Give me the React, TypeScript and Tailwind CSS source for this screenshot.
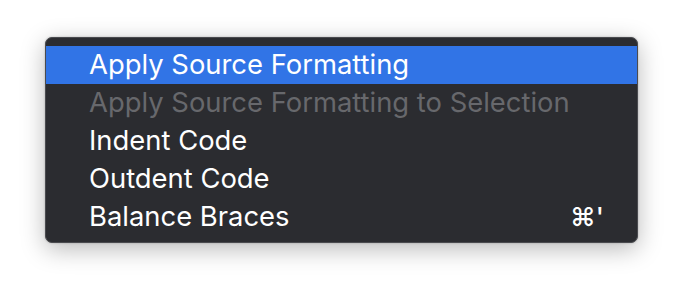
const items = [
  { label: "Apply Source Formatting", active: true },
  { label: "Apply Source Formatting to Selection", disabled: true },
  { label: "Indent Code" },
  { label: "Outdent Code" },
  { label: "Balance Braces", shortcut: "⌘'" },
];

export default function App() {
  return (
    <div className="w-[684px] h-[298px] bg-white flex items-start pt-[37px] pl-[45px] font-['Inter','Liberation_Sans',sans-serif]">
      <div className="w-[593px] h-[206px] rounded-[7px] bg-[#2b2c30] border border-[#4a4b4f] py-[8px] shadow-[0_6px_24px_rgba(0,0,0,0.28),0_0_2px_rgba(0,0,0,0.25)]">
        {items.map((item) => (
          <div
            key={item.label}
            className={`h-[38px] flex items-center justify-between pl-[43px] pr-[33px] text-[27.4px] leading-none ${
              item.active ? "bg-[#3174e6] text-white" : item.disabled ? "text-[#67686c]" : "text-white"
            }`}
          >
            <span className="pb-[1px]">{item.label}</span>
            {item.shortcut && <span className="text-[26px] font-medium">{item.shortcut}</span>}
          </div>
        ))}
      </div>
    </div>
  );
}
